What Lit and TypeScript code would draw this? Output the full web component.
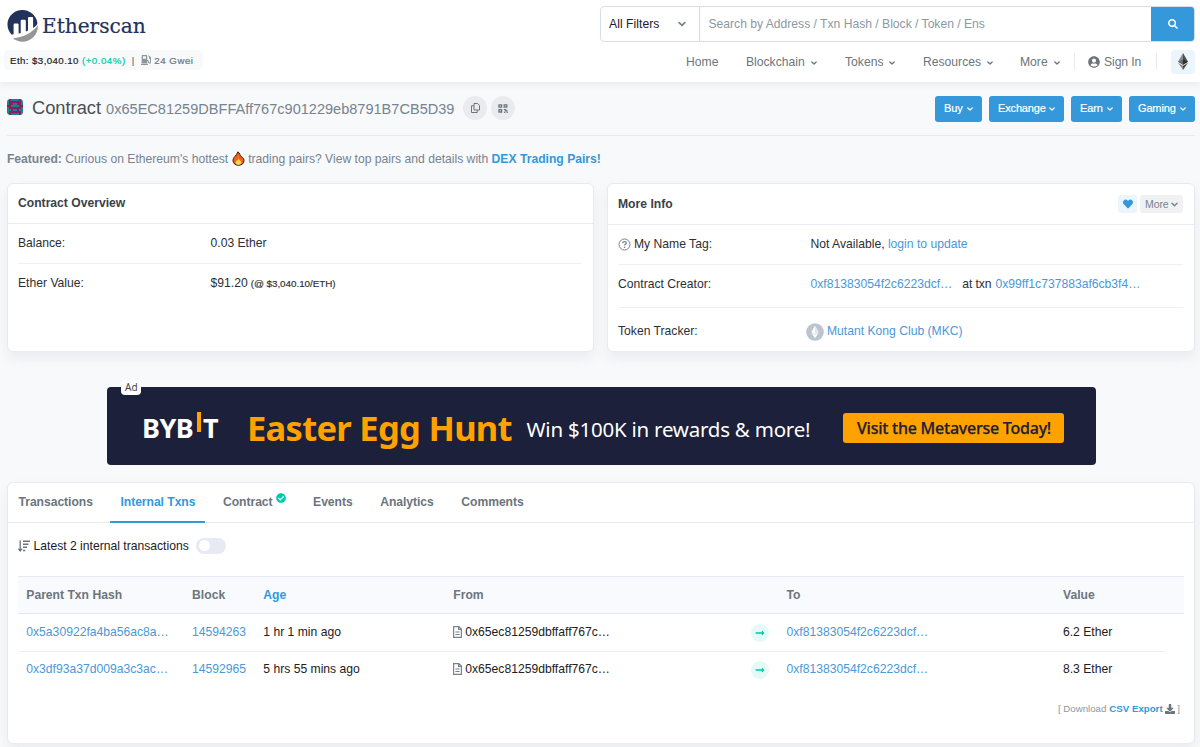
import { LitElement, html, css, svg } from "lit";
import { customElement, property } from "lit/decorators.js";

const chevron = (size = 6) => html`<svg class="chev" width=${size} height=${size} viewBox="0 0 8 8">
  <path d="M1.100 2.600 4 5.400 6.900 2.600" fill="none" stroke="currentColor" stroke-width="1.700" stroke-linecap="round" stroke-linejoin="round" /></svg>`;

const FA: Record<string, [string, string]> = {
  search: ["0 0 512 512", "M505 442.7L405.3 343c-4.500-4.500-10.600-7-17-7H372c27.600-35.300 44-79.700 44-128C416 93.100 322.900 0 208 0S0 93.100 0 208s93.100 208 208 208c48.300 0 92.700-16.400 128-44v16.300c0 6.400 2.500 12.500 7 17l99.700 99.700c9.400 9.400 24.600 9.400 33.900 0l28.300-28.300c9.400-9.400 9.400-24.600.1-34zM208 336c-70.700 0-128-57.200-128-128 0-70.700 57.200-128 128-128 70.700 0 128 57.200 128 128 0 70.700-57.200 128-128 128z"],
  user: ["0 0 496 512", "M248 8C111 8 0 119 0 256s111 248 248 248 248-111 248-248S385 8 248 8zm0 96c48.600 0 88 39.400 88 88s-39.400 88-88 88-88-39.400-88-88 39.400-88 88-88zm0 344c-58.700 0-111.300-26.600-146.500-68.200 18.800-35.400 55.600-59.800 98.500-59.800 2.400 0 4.800.4 7.100 1.100 13 4.200 26.600 6.900 40.900 6.900 14.300 0 28-2.700 40.900-6.900 2.300-.7 4.700-1.100 7.100-1.100 42.900 0 79.700 24.400 98.500 59.800C359.300 421.400 306.700 448 248 448z"],
  heart: ["0 0 512 512", "M462.3 62.600C407.500 15.900 326 24.300 275.700 76.200L256 96.500l-19.700-20.300C186.100 24.300 104.500 15.900 49.700 62.600c-62.800 53.600-66.100 149.800-9.900 207.900l193.500 199.800c12.500 12.900 32.800 12.900 45.300 0l193.500-199.800c56.300-58.100 53-154.300-9.800-207.900z"],
  download: ["0 0 512 512", "M216 0h80c13.300 0 24 10.700 24 24v168h87.700c17.800 0 26.700 21.500 14.100 34.100L269.700 378.300c-7.500 7.500-19.800 7.500-27.300 0L90.100 226.100c-12.600-12.600-3.700-34.100 14.100-34.100H192V24c0-13.300 10.700-24 24-24zm296 376v112c0 13.300-10.700 24-24 24H24c-13.300 0-24-10.700-24-24V376c0-13.300 10.700-24 24-24h146.700l49 49c20.100 20.100 52.500 20.100 72.600 0l49-49H488c13.300 0 24 10.700 24 24z"],
  check: ["0 0 512 512", "M504 256c0 137-111 248-248 248S8 393 8 256 119 8 256 8s248 111 248 248zM227.300 387.300l184-184c6.200-6.200 6.200-16.400 0-22.600l-22.600-22.600c-6.200-6.200-16.400-6.200-22.600 0L216 308.100l-70.100-70.100c-6.200-6.200-16.400-6.200-22.600 0l-22.600 22.600c-6.200 6.200-6.200 16.400 0 22.600l104 104c6.200 6.200 16.400 6.200 22.600.1z"],
  arrow: ["0 0 448 512", "M313.900 216H12c-6.600 0-12 5.400-12 12v56c0 6.600 5.400 12 12 12h301.900v46.100c0 21.400 25.900 32.100 41 17l86.100-86.100c9.400-9.400 9.400-24.600 0-33.900l-86.100-86.100c-15.100-15.100-41-4.400-41 17V216z"],
  gas: ["0 0 512 512", "M336 448H16c-8.800 0-16 7.200-16 16v32c0 8.800 7.200 16 16 16h320c8.800 0 16-7.200 16-16v-32c0-8.800-7.200-16-16-16zm157.200-340.700l-81-81c-6.200-6.200-16.400-6.200-22.600 0l-11.300 11.300c-6.200 6.200-6.200 16.400 0 22.600L416 97.900V160c0 28.100 20.900 51.300 48 55.200V376c0 13.200-10.800 24-24 24s-24-10.800-24-24v-32c0-48.600-39.400-88-88-88h-8V64c0-35.300-28.700-64-64-64H96C60.700 0 32 28.700 32 64v352h288V304h8c22.100 0 40 17.900 40 40v27.800c0 37.700 27 72 64.500 75.900 43 4.300 79.500-29.500 79.500-71.700V152.600c0-17-6.800-33.300-18.800-45.300zM256 192H96V64h160v128z"],
};

const fa = (name: string, size: number) => {
  const [box, d] = FA[name];
  return html`<svg width=${size} height=${size} viewBox=${box}><path fill="currentColor" d=${d} /></svg>`;
};

const iconStyles = css`
  :host { display: block; }
  * { box-sizing: border-box; }
  svg { display: block; flex: none; }
`;

@customElement("site-header")
class SiteHeader extends LitElement {
  static styles = [iconStyles, css`
    .header { display: flex; justify-content: space-between; height: 82px; background: #fff; padding: 0 5px 0 4px; box-shadow: 0 3px 6px rgba(140,152,164,.12); position: relative; }
    .brand { padding: 10px 0 0 3px; display: flex; align-items: center; gap: 3px; height: 42px; }
    .name { font: 20.2px "DejaVu Serif", serif; color: #21325b; line-height: 30px; letter-spacing: -.05px; margin-left: 1px; -webkit-text-stroke: .2px #21325b; }
    .price { margin-top: 8px; height: 20px; width: 199px; border-radius: 5px; background: #f8f9fa; display: flex; align-items: center; padding-left: 6px; font-size: 9.700px; color: #6c757d; white-space: pre; -webkit-text-stroke: .2px currentColor; }
    .usd { color: #1e2022; letter-spacing: .42px; }
    .up { color: #00c9a7; letter-spacing: .52px; margin-left: 3px; }
    .bar { margin: 0 7px 0 6px; }
    .gwei { letter-spacing: .55px; margin-left: 3px; }
    .gas { color: #8d959c; }
    .right { width: 595px; display: flex; flex-direction: column; }
    .search { margin-top: 6px; height: 36px; display: flex; border: 1px solid #d9dde7; border-radius: 4px; overflow: hidden; }
    .filter { width: 99px; display: flex; align-items: center; justify-content: space-between; padding: 0 13px 0 8px; border-right: 1px solid #d5dae2; color: #1e2022; letter-spacing: .05px; }
    .filter .chev { color: #77838f; }
    .query { flex: 1; display: flex; align-items: center; padding: 0 0 0 8.500px; color: #8c98a4; letter-spacing: -.01px; }
    .go { width: 44px; margin: -1px -1px -1px 0; display: grid; place-items: center; background: #3498db; color: #fff; }
    .nav { display: grid; grid-template-columns: 60px 99px 78px 97px 54px 14px 68px 15px 24px; padding-left: 86px; align-items: center; height: 41px; color: #6c757d; }
    .item { display: flex; align-items: center; gap: 6px; white-space: nowrap; }
    .item .chev { margin-top: 2px; }
    .user { gap: 4px; letter-spacing: -.08px; }
    .sep { width: 1px; height: 17px; background: #e7eaf3; }
    .chain { width: 24px; height: 24px; border-radius: 4px; background: #ebf5fb; display: grid; place-items: center; }
  `];
  render() {
    return html`<header class="header">
      <div>
        <div class="brand">
          <svg width="31" height="32" viewBox="0 0 31 32">
            <path fill="#21325b" d="M4.500 24.500C-.5 19.200-.8 11.300 3.400 5.800 8.300-.6 17.500-1.900 24.100 2.800c3.500 2.500 5.700 6 6.300 10 .2 1.700-1.500 3.400-4.300 5.200V8.200c0-.9-.5-1.300-1.300-1.300h-2.500c-.8 0-1.300.5-1.300 1.300v12.300l-2.200 1V11c0-.8-.5-1.300-1.300-1.300H15c-.8 0-1.300.5-1.300 1.300v11.900l-2.100.5v-8.600c0-.8-.5-1.300-1.300-1.300H7.900c-.8 0-1.300.5-1.300 1.300v9.400c-.7.2-1.400.3-2.100.3z" />
            <path fill="#979695" d="M6 28.200c11-1 19-5.400 25-13 .2 9.300-7 16.500-15.500 16.500-3.600 0-6.900-1.300-9.500-3.500z" />
          </svg>
          <span class="name">Etherscan</span>
        </div>
        <div class="price"><span class="usd">Eth: $3,040.10</span><span class="up">(+0.04%)</span><span class="bar">|</span><span class="gas">${fa("gas", 10)}</span><span class="gwei">24 Gwei</span></div>
      </div>
      <div class="right">
        <div class="search">
          <div class="filter"><span>All Filters</span>${chevron(8)}</div>
          <div class="query">Search by Address / Txn Hash / Block / Token / Ens</div>
          <div class="go">${fa("search", 10)}</div>
        </div>
        <nav class="nav">
          <span class="item">Home</span>
          <span class="item">Blockchain ${chevron()}</span>
          <span class="item">Tokens ${chevron()}</span>
          <span class="item">Resources ${chevron()}</span>
          <span class="item">More ${chevron()}</span>
          <span class="sep"></span>
          <span class="item user">${fa("user", 12)}<span>Sign In</span></span>
          <span class="sep"></span>
          <span class="chain"><svg width="10" height="17" viewBox="0 0 10 17">
            <path fill="#8c8c8c" d="M5 0 0 8.700l5 3z" /><path fill="#4c4c4b" d="m5 0 5 8.700-5 3z" />
            <path fill="#6b6b6b" d="m0 8.700 5-2.200v5.200z" /><path fill="#303030" d="m10 8.700-5-2.200v5.200z" />
            <path fill="#8c8c8c" d="m0 9.800 5 3V17z" /><path fill="#4c4c4b" d="m10 9.800-5 3V17z" />
          </svg></span>
        </nav>
      </div>
    </header>`;
  }
}

@customElement("contract-title")
class ContractTitle extends LitElement {
  static styles = [iconStyles, css`
    .row { display: flex; align-items: center; height: 54px; margin: 0 5px 0 7px; border-bottom: 1px solid #e7eaf3; }
    .blockie { border-radius: 4px; margin-bottom: 3px; }
    .title { font-size: 18.300px; color: #4a4f55; margin: -1px 0 0 9px; }
    .address { font-size: 14.550px; color: #77838f; margin: 0 0 0 5px; flex: none; }
    .round { width: 24px; height: 24px; border-radius: 50%; background: #e9ebee; display: grid; place-items: center; margin: 0 0 1px 4px; color: #6c757d; }
    .first { margin-left: 9px; }
    .buttons { margin: 1px 0 0 auto; display: flex; gap: 7px; }
    .btn { height: 26px; border-radius: 3px; background: #3498db; color: #fff; font-size: 11px; display: flex; align-items: center; justify-content: space-between; padding: 0 9px 2px 9px; letter-spacing: -.15px; -webkit-text-stroke: .2px #fff; }
    .btn .chev { margin-top: 2px; }
    .w48 { width: 47px; } .w75 { width: 75px; } .w51 { width: 51px; } .w66 { width: 66px; }
    .featured { margin: 16px 7px 0; line-height: 15px; color: #77838f; display: flex; white-space: pre; }
    .flame { margin: -1px 3px 0 4px; }
    b { letter-spacing: -.05px; }
    .link { color: #3498db; font-weight: bold; }
  `];
  render() {
    const cells = ["21000012", "01111110", "21122112", "11200211", "21111112", "02100120", "21111112", "21200212"];
    return html`<div class="row">
        <svg class="blockie" width="16" height="16" viewBox="0 0 8 8" shape-rendering="crispEdges">
          <rect width="8" height="8" fill="#127fa0" />
          ${cells.map((r, y) => [...r].map((c, x) => c === "0" ? null : svg`<rect x=${x} y=${y} width="1" height="1" fill=${c === "1" ? "#8a1a6c" : "#1c8a63"} />`))}
        </svg>
        <span class="title">Contract</span><span class="address">0x65EC81259DBFFAff767c901229eb8791B7CB5D39</span>
        <span class="round first"><svg width="9" height="10" viewBox="0 0 9 10" fill="none" stroke="currentColor" stroke-width="1"><path d="M3 .5h3.600L8.500 2.400V7H3zM3 2.800H.5v6.700h5.700V7" /></svg></span>
        <span class="round"><svg width="10" height="9" viewBox="0 0 10 9" fill="none" stroke="currentColor" stroke-width="1.300"><path d="M1 .8h2.600v2.300H1zM6.200.8h2.600v2.300H6.200zM1 5.700h2.600V8H1z" /><path d="M5.900 5.700h1.700v1.200h2M6 8.400h1.300m1.200 0h1.300" /></svg></span>
        <div class="buttons">
          <span class="btn w48">Buy ${chevron()}</span><span class="btn w75">Exchange ${chevron()}</span><span class="btn w51">Earn ${chevron()}</span><span class="btn w66">Gaming ${chevron()}</span>
        </div>
      </div>
      <div class="featured"><b>Featured:</b> Curious on Ethereum's hottest<svg class="flame" width="13" height="15" viewBox="0 0 13 15">
          <path fill="#f4621f" stroke="#2a1a14" stroke-width="1" d="M6 .8c2 2 1.800 3 2.900 4.500C10.800 6.600 12 7.600 12 9.600c0 2.900-2.400 4.700-5.500 4.700S1 12.300 1 9.600c0-1.800.9-3 1.900-4.100C4.200 4.200 5 2.700 6 .8z" />
          <path fill="#ffd84a" d="M6.500 7.500c.5 1.500 2.700 2 2.700 4 0 1.400-1.200 2.300-2.700 2.300s-2.700-.9-2.700-2.300c0-1.300.8-1.900 1.300-2.500.3.500.5.700.8.800 0-.9.200-1.700.6-2.300z" />
        </svg>trading pairs? View top pairs and details with <span class="link">DEX Trading Pairs!</span></div>`;
  }
}

@customElement("overview-cards")
class OverviewCards extends LitElement {
  static styles = [iconStyles, css`
    .grid { display: grid; grid-template-columns: 587px 588px; gap: 13px; margin: 16px 5px 0 7px; }
    .card { height: 169px; background: #fff; border: 1px solid #e7eaf3; border-radius: 6px; box-shadow: 0 6px 12px rgba(140,152,164,.13); color: #2b2f33; }
    .head { height: 40px; padding: 0 11px 1px 10px; display: flex; align-items: center; font-weight: bold; color: #3a4149; border-bottom: 1px solid #e7eaf3; }
    .tall { height: 41px; padding-bottom: 0; }
    .line { margin: 0 11px 0 10px; padding-bottom: 2px; display: flex; align-items: center; height: 40px; white-space: pre; }
    .ruled { border-bottom: 1px solid #eef0f6; padding-bottom: 1px; }
    .creator { height: 43px; padding-bottom: 4px; }
    .token { height: 44px; padding-top: 2px; padding-bottom: 0; }
    .key { width: 192.500px; flex: none; display: flex; align-items: center; gap: 3px; }
    .small { font-size: 9.900px; margin-left: 3px; letter-spacing: -.05px; -webkit-text-stroke: .15px currentColor; }
    .link { color: #4a98d9; }
    .tools { margin-left: auto; display: flex; gap: 3px; font-weight: normal; }
    .fav { width: 19px; height: 18px; border-radius: 3px; background: #ebf5fb; color: #3498db; display: grid; place-items: center; padding-left: 1px; }
    .more { width: 43px; height: 18px; border-radius: 3px; background: #f0f1f3; color: #77838f; display: flex; align-items: center; gap: 2px; padding-left: 5px; font-size: 10.500px; letter-spacing: -.1px; }
    .q { color: #77838f; }
    .coin { margin: 2px 3.500px 0 -5px; }
    .at { margin: 0 4px 0 10px; letter-spacing: -.08px; }
  `];
  render() {
    return html`<div class="grid">
      <section class="card">
        <div class="head">Contract Overview</div>
        <div class="line ruled"><span class="key">Balance:</span>0.03 Ether</div>
        <div class="line"><span class="key">Ether Value:</span>$91.20<span class="small">(@ $3,040.10/ETH)</span></div>
      </section>
      <section class="card">
        <div class="head tall">More Info<div class="tools"><span class="fav">${fa("heart", 10)}</span><span class="more">More${chevron(7)}</span></div></div>
        <div class="line ruled"><span class="key"><svg class="q" width="13" height="13" viewBox="0 0 13 13" fill="none" stroke="currentColor"><circle cx="6.500" cy="6.500" r="5.500" stroke-width="1" /><path stroke-width="1.300" d="M4.700 5.200c.1-1 .9-1.600 1.800-1.600 1 0 1.800.6 1.800 1.500 0 1.200-1.700 1.200-1.700 2.400M6.600 8.700V10" /></svg>My Name Tag:</span>Not Available, <span class="link">login to update</span></div>
        <div class="line ruled creator"><span class="key">Contract Creator:</span><span class="link">0xf81383054f2c6223dcf…</span><span class="at">at txn</span><span class="link">0x99ff1c737883af6cb3f4…</span></div>
        <div class="line token"><span class="key">Token Tracker:</span><svg class="coin" width="18" height="18" viewBox="0 0 18 18"><circle cx="9" cy="9" r="8.800" fill="#bcc4cf" /><path fill="#fff" d="M9 2.800 5.400 9.300 9 11.500l3.600-2.200z" /><path fill="#fff" d="M5.400 9.700 9 15.200l3.600-5.500L9 11.800z" /><path fill="#e3e7ec" d="M9 2.800v8.700l3.600-2.200z" /></svg><span class="link">Mutant Kong Club (MKC)</span></div>
      </section>
    </div>`;
  }
}

@customElement("ad-banner")
class AdBanner extends LitElement {
  static styles = [iconStyles, css`
    .banner { position: relative; margin: 35px 104px 0 107.400px; height: 78px; border-radius: 4px; background: #1c203a; display: flex; align-items: center; font-family: "Noto Sans", sans-serif; white-space: nowrap; color: #fff; }
    .tag { position: absolute; left: 14px; top: -7px; width: 20px; height: 15px; background: #fff; border-radius: 4px; color: #444; font: 10px/15px "Noto Sans", sans-serif; text-align: center; }
    .logo { width: 76px; margin: 3px 0 0 34.600px; display: flex; align-items: center; font-weight: bold; font-size: 27px; letter-spacing: -.5px; }
    .logo i { width: 4px; height: 20px; background: #ffa200; margin: -12px 2px 0 4px; }
    .big { width: 264px; margin: 2px 0 0 29px; font-weight: bold; font-size: 34.500px; letter-spacing: -.7px; color: #ffa200; }
    .win { width: 284px; margin-left: 15.500px; margin-top: 5px; font-size: 20.500px; letter-spacing: -.23px; }
    .cta { width: 221px; height: 30px; margin: 4px 0 0 33px; border-radius: 3px; background: #ffa200; color: #1c203a; display: flex; align-items: center; justify-content: center; font-weight: 500; font-size: 16px; letter-spacing: -.24px; -webkit-text-stroke: .25px #1c203a; }
  `];
  render() {
    return html`<div class="banner"><span class="tag">Ad</span>
      <span class="logo">BYB<i></i>T</span><span class="big">Easter Egg Hunt</span>
      <span class="win">Win $100K in rewards &amp; more!</span><span class="cta">Visit the Metaverse Today!</span></div>`;
  }
}

@customElement("txn-panel")
class TxnPanel extends LitElement {
  @property({ attribute: false }) rows = [
    { hash: "0x5a30922fa4ba56ac8a…", block: "14594263", age: "1 hr 1 min ago", from: "0x65ec81259dbffaff767c…", to: "0xf81383054f2c6223dcf…", value: "6.2 Ether" },
    { hash: "0x3df93a37d009a3c3ac…", block: "14592965", age: "5 hrs 55 mins ago", from: "0x65ec81259dbffaff767c…", to: "0xf81383054f2c6223dcf…", value: "8.3 Ether" },
  ];
  static styles = [iconStyles, css`
    .card { margin: 17px 5px 0 7px; height: 262px; background: #fff; border: 1px solid #e7eaf3; border-radius: 6px; box-shadow: 0 6px 12px rgba(140,152,164,.13); color: #1e2022; }
    .tabs { height: 40px; display: flex; border-bottom: 1px solid #e7eaf3; font-weight: bold; color: #6c757d; padding-left: .5px; letter-spacing: -.04px; }
    .tab { height: 40px; padding: 0 10px 2px; margin-right: 7.500px; display: flex; align-items: center; flex: none; }
    .active { color: #3498db; border-bottom: 2px solid #3498db; padding-bottom: 0; }
    .verified { color: #00c9a7; margin: -9px 0 0 3px; }
    .latest { height: 46px; margin: 0 10px; display: flex; align-items: center; }
    .latest .sort { margin-right: 3.500px; color: #6c757d; }
    .toggle { margin-left: 7.400px; width: 30px; height: 16px; border-radius: 8px; background: #e7eaf3; padding: 2.500px 3px; margin-top: -1px; }
    .knob { display: block; width: 11px; height: 11px; border-radius: 50%; background: #fff; }
    .table { margin: 7px 10px 0; }
    .r { display: grid; grid-template-columns: 165.800px 71.200px 190px 298px 35.200px 276.500px 1fr; padding-left: 8.300px; align-items: center; height: 37px; padding-bottom: 1px; white-space: nowrap; }
    .h { height: 38px; background: #f8fafd; border-top: 1px solid #e7eaf3; border-bottom: 1px solid #e1e5f0; font-weight: bold; color: #6c757d; }
    .body { width: 1148px; }
    .body + .body { border-top: 1px solid #eef0f6; padding-bottom: 2px; }
    .link { color: #4a98d9; }
    .age { color: #3498db; }
    .from { display: flex; align-items: center; gap: 3px; }
    .file { color: #77838f; }
    .dir { width: 18px; height: 18px; border-radius: 50%; background: #e5f9f6; color: #00c9a7; display: grid; place-items: center; margin-top: 2px; margin-left: -.3px; }
    .csv { margin: 15px 14px 0 0; display: flex; justify-content: flex-end; align-items: center; font-size: 9.700px; color: #8c98a4; white-space: pre; }
    .csv span { letter-spacing: -.02px; }
    .csv b { color: #3498db; margin: 0 2px 0 3px; }
    .csv svg { color: #6c757d; margin-right: 0; }
  `];
  render() {
    return html`<section class="card">
      <div class="tabs"><span class="tab">Transactions</span><span class="tab active">Internal Txns</span><span class="tab">Contract<span class="verified">${fa("check", 10)}</span></span><span class="tab">Events</span><span class="tab">Analytics</span><span class="tab">Comments</span></div>
      <div class="latest"><svg class="sort" width="12" height="12" viewBox="0 0 12 12" fill="none" stroke="currentColor"><path stroke-width="1.300" d="M2.200.5v10.300M.3 8.700l1.900 2.200 1.900-2.200" /><path stroke-width="1.400" d="M5 1.200h7M5 4.200h5.500M5 7.300h4M5 10.500h2.300" /></svg>
        Latest 2 internal transactions<span class="toggle"><span class="knob"></span></span></div>
      <div class="table">
        <div class="r h"><span>Parent Txn Hash</span><span>Block</span><span class="age">Age</span><span>From</span><span></span><span>To</span><span>Value</span></div>
        ${this.rows.map((t) => html`<div class="r body"><span class="link">${t.hash}</span><span class="link">${t.block}</span><span>${t.age}</span>
          <span class="from"><svg class="file" width="9" height="12" viewBox="0 0 9 12" fill="none" stroke="currentColor" stroke-width="1.200"><path d="M.6.600h5.300l2.500 2.500v8.300H.6zM5.600.600v2.800h2.800M2.400 6h4.200M2.400 8.500h4.200" /></svg>${t.from}</span>
          <span class="dir">${fa("arrow", 10)}</span><span class="link">${t.to}</span><span>${t.value}</span></div>`)}
      </div>
      <div class="csv"><span>[ Download</span><b>CSV Export</b>${fa("download", 10)} ]</div>
    </section>`;
  }
}

@customElement("app-root")
class AppRoot extends LitElement {
  static styles = css`
    :host { display: block; height: 747px; overflow: hidden; background: #f8f9fb; font: 12.150px "Liberation Sans", Arial, sans-serif; }
  `;
  render() {
    return html`<site-header></site-header><contract-title></contract-title><overview-cards></overview-cards><ad-banner></ad-banner><txn-panel></txn-panel>`;
  }
}
